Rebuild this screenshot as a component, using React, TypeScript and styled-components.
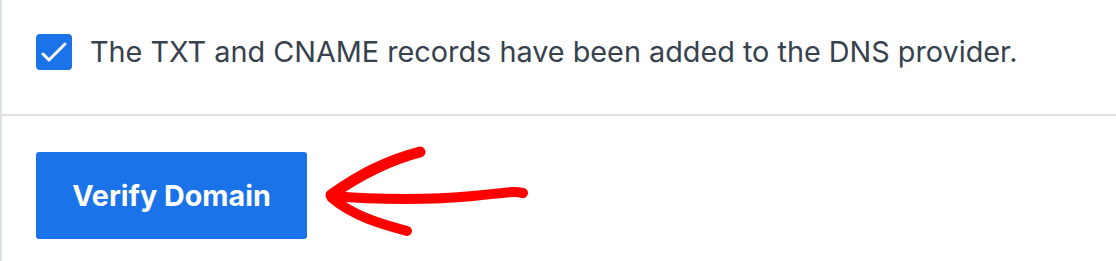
import React from "react";
import styled, { createGlobalStyle } from "styled-components";

const Global = createGlobalStyle`
  html, body { margin: 0; padding: 0; background: #ffffff; }
  body { font-family: Inter, "Noto Sans", sans-serif; -webkit-font-smoothing: antialiased; }
`;

const Panel = styled.div`
  width: 1116px;
  height: 261px;
  box-sizing: border-box;
  border-left: 2px solid #dce1e6;
  display: flex;
  flex-direction: column;
  overflow: hidden;
`;

const ConfirmSection = styled.div`
  height: 116px;
  box-sizing: border-box;
  border-bottom: 2px solid #dce1e6;
  padding: 34px 0 0 34px;
  display: flex;
  align-items: flex-start;
  gap: 18px;
`;

const Box = styled.div`
  width: 36px;
  height: 36px;
  border-radius: 4px;
  background: #1a73e8;
  display: flex;
  align-items: center;
  justify-content: center;
  flex: none;
`;

const Label = styled.span`
  font-family: Inter, "Noto Sans", sans-serif;
  font-size: 28.8px;
  line-height: 36px;
  color: #36424d;
`;

const ActionSection = styled.div`
  padding: 36px 0 0 34px;
  display: flex;
  align-items: flex-start;
  gap: 16px;
`;

const VerifyButton = styled.button`
  width: 271px;
  height: 87px;
  border: none;
  border-radius: 3px;
  background: #1a73e8;
  color: #ffffff;
  font-family: Inter, "Noto Sans", sans-serif;
  font-weight: 700;
  font-size: 28.7px;
  padding: 0;
  cursor: pointer;
`;

const Arrow = styled.svg`
  display: block;
  margin-top: -8px;
`;

export default function App() {
  return (
    <>
      <Global />
      <Panel>
        <ConfirmSection>
          <Box>
            <svg width="36" height="36" viewBox="0 0 36 36">
              <path d="M7 20 L13 26 L29 10" fill="none" stroke="#fff" strokeWidth="3" strokeLinecap="round" strokeLinejoin="round" />
            </svg>
          </Box>
          <Label>The TXT and CNAME records have been added to the DNS provider.</Label>
        </ConfirmSection>
        <ActionSection>
          <VerifyButton>Verify Domain</VerifyButton>
          <Arrow width="220" height="100" viewBox="0 0 220 100">
            <g fill="none" stroke="#ff0000" strokeLinecap="round" strokeLinejoin="round">
              <path d="M8 51 C35 32 62 17 97 8" strokeWidth="11" />
              <path d="M8 52 C55 56 110 56 150 52 S190 47 200 49" strokeWidth="10" />
              <path d="M9 54 C30 72 58 80 84 87" strokeWidth="10" />
            </g>
          </Arrow>
        </ActionSection>
      </Panel>
    </>
  );
}
